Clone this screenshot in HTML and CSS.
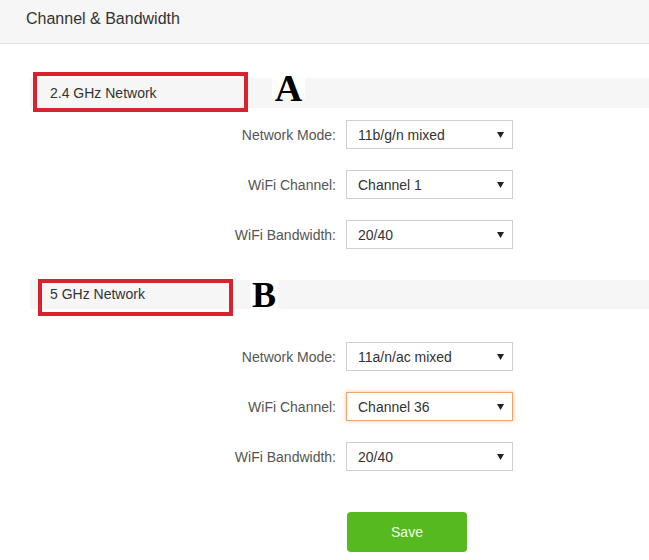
FILE: index.html
```html
<!DOCTYPE html>
<html>
<head>
<meta charset="utf-8">
<link rel="stylesheet" href="styles.css">
</head>
<body>
<header class="page-head">Channel &amp; Bandwidth</header>
<main class="content">
  <section class="block block-24">
    <div class="band band-24">
      <span class="band-title">2.4 GHz Network</span>
      <span class="mark mark-24"></span>
      <span class="tag tag-a">A</span>
    </div>
    <div class="rows rows-24">
      <div class="row"><span class="lbl">Network Mode:</span><div class="sel"><span>11b/g/n mixed</span><svg class="arr" width="7" height="6" viewBox="0 0 7 6"><path d="M0 0H7L3.5 6Z" fill="#222"/></svg></div></div>
      <div class="row"><span class="lbl">WiFi Channel:</span><div class="sel"><span>Channel 1</span><svg class="arr" width="7" height="6" viewBox="0 0 7 6"><path d="M0 0H7L3.5 6Z" fill="#222"/></svg></div></div>
      <div class="row"><span class="lbl">WiFi Bandwidth:</span><div class="sel"><span>20/40</span><svg class="arr" width="7" height="6" viewBox="0 0 7 6"><path d="M0 0H7L3.5 6Z" fill="#222"/></svg></div></div>
    </div>
  </section>
  <section class="block block-5">
    <div class="band band-5">
      <span class="band-title">5 GHz Network</span>
      <span class="mark mark-5"></span>
      <span class="tag tag-b">B</span>
    </div>
    <div class="rows rows-5">
      <div class="row"><span class="lbl">Network Mode:</span><div class="sel"><span>11a/n/ac mixed</span><svg class="arr" width="7" height="6" viewBox="0 0 7 6"><path d="M0 0H7L3.5 6Z" fill="#222"/></svg></div></div>
      <div class="row"><span class="lbl">WiFi Channel:</span><div class="sel sel-focus"><span>Channel 36</span><svg class="arr" width="7" height="6" viewBox="0 0 7 6"><path d="M0 0H7L3.5 6Z" fill="#222"/></svg></div></div>
      <div class="row"><span class="lbl">WiFi Bandwidth:</span><div class="sel"><span>20/40</span><svg class="arr" width="7" height="6" viewBox="0 0 7 6"><path d="M0 0H7L3.5 6Z" fill="#222"/></svg></div></div>
    </div>
  </section>
  <div class="actions"><button class="save">Save</button></div>
</main>
</body>
</html>
```
FILE: styles.css
```css
* { box-sizing: border-box; }
html, body { margin: 0; padding: 0; background: #fff; }
body {
  font-family: "Liberation Sans", Arial, sans-serif;
  color: #333;
  width: 649px;
  height: 560px;
  overflow: hidden;
}
.page-head {
  height: 44px;
  background: #f6f6f6;
  border-bottom: 1px solid #e3e3e3;
  padding-left: 26px;
  font-size: 16px;
  line-height: 38px;
  color: #333;
}
.content { padding-left: 30px; }
.block-24 { margin-top: 34px; }
.block-5 { margin-top: 31px; }
.band {
  position: relative;
  background: #f6f6f6;
  padding-left: 20px;
  font-size: 14px;
  color: #333;
}
.band-24 { height: 30px; line-height: 30px; }
.band-5 { height: 29px; line-height: 29px; }
.mark {
  position: absolute;
  border: 4px solid #d8222d;
}
.mark-24 { left: 3px; top: -6px; width: 215px; height: 40px; }
.mark-5 { left: 8px; top: -1px; width: 195px; height: 37px; }
.tag {
  position: absolute;
  background: #fff;
  font-family: "Liberation Serif", "Times New Roman", serif;
  font-weight: bold;
  color: #000;
  text-align: center;
}
.tag-a { left: 242px; top: -8px; width: 33px; height: 28px; font-size: 38px; line-height: 36px; }
.tag-b { left: 220px; top: 0; width: 28px; height: 29px; font-size: 36px; line-height: 31px; }
.rows { display: flex; flex-direction: column; gap: 21px; }
.rows-24 { margin-top: 12px; }
.rows-5 { margin-top: 33px; }
.row {
  display: grid;
  grid-template-columns: 306px 167px;
  column-gap: 10px;
  align-items: center;
}
.lbl { text-align: right; font-size: 14px; color: #555; }
.sel {
  height: 29px;
  border: 1px solid #cfcfcf;
  background: #fff;
  display: flex;
  align-items: center;
  justify-content: space-between;
  padding: 0 8px 0 11px;
  font-size: 14px;
  color: #333;
}
.sel-focus {
  border-color: #f0a66a;
  box-shadow: 0 0 4px rgba(240, 140, 60, 0.55);
}
.arr { display: block; }
.actions { margin-top: 41px; padding-left: 317px; }
.save {
  width: 120px;
  height: 40px;
  border: none;
  border-radius: 4px;
  background: #56b91f;
  color: #effde3;
  font-family: "Liberation Sans", Arial, sans-serif;
  font-size: 14px;
  padding: 0;
}
```
